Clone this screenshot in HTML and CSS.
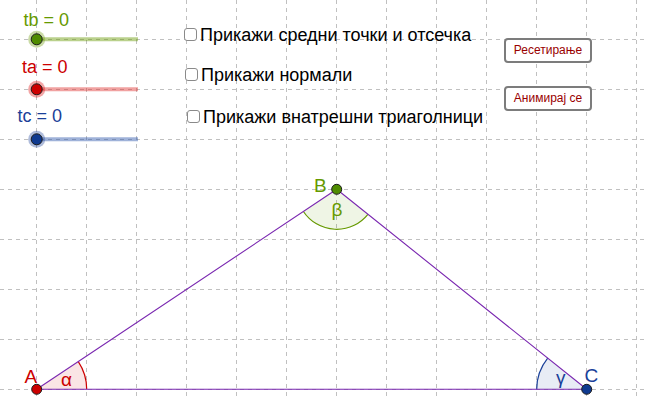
FILE: index.html
```html
<!DOCTYPE html>
<html>
<head>
<meta charset="utf-8">
<link rel="stylesheet" href="styles.css">
</head>
<body>
<div class="applet">
  <svg class="board" width="645" height="400" viewBox="0 0 645 400">
    <g class="grid">
      <line x1="36.5" y1="0" x2="36.5" y2="400"/>
      <line x1="86.5" y1="0" x2="86.5" y2="400"/>
      <line x1="136.5" y1="0" x2="136.5" y2="400"/>
      <line x1="186.5" y1="0" x2="186.5" y2="400"/>
      <line x1="236.5" y1="0" x2="236.5" y2="400"/>
      <line x1="286.5" y1="0" x2="286.5" y2="400"/>
      <line x1="336.5" y1="0" x2="336.5" y2="400"/>
      <line x1="386.5" y1="0" x2="386.5" y2="400"/>
      <line x1="436.5" y1="0" x2="436.5" y2="400"/>
      <line x1="486.5" y1="0" x2="486.5" y2="400"/>
      <line x1="536.5" y1="0" x2="536.5" y2="400"/>
      <line x1="586.5" y1="0" x2="586.5" y2="400"/>
      <line x1="636.5" y1="0" x2="636.5" y2="400"/>
      <line x1="0" y1="39.5" x2="645" y2="39.5"/>
      <line x1="0" y1="89.5" x2="645" y2="89.5"/>
      <line x1="0" y1="139.5" x2="645" y2="139.5"/>
      <line x1="0" y1="189.5" x2="645" y2="189.5"/>
      <line x1="0" y1="239.5" x2="645" y2="239.5"/>
      <line x1="0" y1="289.5" x2="645" y2="289.5"/>
      <line x1="0" y1="339.5" x2="645" y2="339.5"/>
      <line x1="0" y1="389.5" x2="645" y2="389.5"/>
    </g>

    <!-- sliders -->
    <line class="track track-g" x1="36.7" y1="39.3" x2="138" y2="39.3"/>
    <line class="track track-r" x1="36.7" y1="89.3" x2="138" y2="89.3"/>
    <line class="track track-b" x1="36.7" y1="139.3" x2="138" y2="139.3"/>
    <circle class="halo fill-g" cx="36.7" cy="39.3" r="8.5"/>
    <circle class="halo fill-r" cx="36.7" cy="89.3" r="8.5"/>
    <circle class="halo fill-b" cx="36.7" cy="139.3" r="8.5"/>
    <circle class="dot dot-g" cx="36.7" cy="39.3" r="5.5"/>
    <circle class="dot dot-r" cx="36.7" cy="89.3" r="5.5"/>
    <circle class="dot dot-b" cx="36.7" cy="139.3" r="5.5"/>
    <text class="lbl18 c-g" x="23.5" y="25.7">tb = 0</text>
    <text class="lbl18 c-r" x="22" y="72.8">ta = 0</text>
    <text class="lbl18 c-b" x="17.5" y="122">tc = 0</text>

    <!-- angle sectors -->
    <path class="sector sec-r" d="M36.7 389.3 L86.7 389.3 A50 50 0 0 0 78.3 361.6 Z"/>
    <path class="sector sec-g" d="M336.7 189.3 L303.4 211.5 A40 40 0 0 0 367.9 214.3 Z"/>
    <path class="sector sec-b" d="M586.7 389.3 L536.7 389.3 A50 50 0 0 1 547.7 358.1 Z"/>
    <path class="arc arc-r" d="M86.7 389.3 A50 50 0 0 0 78.3 361.6"/>
    <path class="arc arc-g" d="M303.4 211.5 A40 40 0 0 0 367.9 214.3"/>
    <path class="arc arc-b" d="M536.7 389.3 A50 50 0 0 1 547.7 358.1"/>

    <!-- triangle -->
    <polygon class="tri" points="36.7,389.3 336.7,189.3 586.7,389.3"/>

    <circle class="dot dot-r" cx="36.7" cy="389.3" r="5"/>
    <circle class="dot dot-g" cx="336.7" cy="189.3" r="5"/>
    <circle class="dot dot-b" cx="586.7" cy="389.3" r="5"/>

    <text class="lbl19 c-r" x="24.5" y="383">A</text>
    <text class="lbl19 c-g" x="314" y="191.5">B</text>
    <text class="lbl19 c-b" x="584.5" y="382">C</text>
    <text class="lbl19 c-r" x="61" y="386">α</text>
    <text class="lbl19 c-g" x="331.5" y="216">β</text>
    <text class="lbl19 c-b" x="556" y="384">γ</text>
  </svg>

  <label class="check check-1"><span class="box"></span><span class="check-text">Прикажи средни точки и отсечка</span></label>
  <label class="check check-2"><span class="box"></span><span class="check-text">Прикажи нормали</span></label>
  <label class="check check-3"><span class="box"></span><span class="check-text">Прикажи внатрешни триаголници</span></label>

  <button class="btn btn-reset">Ресетирање</button>
  <button class="btn btn-anim">Анимирај се</button>
</div>
</body>
</html>
```
FILE: styles.css
```css
html, body {
  margin: 0;
  padding: 0;
  background: #ffffff;
}

.applet {
  position: relative;
  width: 645px;
  height: 400px;
  overflow: hidden;
  background: #ffffff;
  font-family: "Liberation Sans", Arial, sans-serif;
}

.board {
  display: block;
}

.grid line {
  stroke: #c0c0c0;
  stroke-width: 1;
  stroke-dasharray: 4 4;
}

.track {
  stroke-width: 4;
  stroke-opacity: 0.45;
}
.track-g { stroke: #669900; }
.track-r { stroke: #e0302f; }
.track-b { stroke: #2a55aa; }

.halo { opacity: 0.35; }
.fill-g { fill: #669900; }
.fill-r { fill: #dd0000; }
.fill-b { fill: #1a4099; }

.dot {
  stroke: #1a1a1a;
  stroke-width: 1;
}
.dot-g { fill: #4f8c00; }
.dot-r { fill: #cc0000; }
.dot-b { fill: #0f3a90; }

.lbl18 {
  font-family: "Liberation Sans", Arial, sans-serif;
  font-size: 18px;
}
.lbl19 {
  font-family: "Liberation Sans", Arial, sans-serif;
  font-size: 19px;
}
.c-g { fill: #669900; }
.c-r { fill: #cc0000; }
.c-b { fill: #1a4099; }

.sector { stroke: none; }
.sec-r { fill: rgba(204, 0, 0, 0.1); }
.sec-g { fill: rgba(102, 153, 0, 0.1); }
.sec-b { fill: rgba(26, 64, 153, 0.1); }

.arc {
  fill: none;
  stroke-width: 1.2;
}
.arc-r { stroke: #cc0000; }
.arc-g { stroke: #669900; }
.arc-b { stroke: #1a4099; }

.tri {
  fill: none;
  stroke: #7a27b0;
  stroke-width: 1.1;
}

.check {
  position: absolute;
  display: flex;
  align-items: flex-start;
  gap: 3px;
  font-size: 18px;
  line-height: 20px;
  color: #000000;
  white-space: nowrap;
}
.check-1 { left: 184px; top: 25px; }
.check-2 { left: 185px; top: 65px; }
.check-3 { left: 187px; top: 107px; }

.box {
  width: 11px;
  height: 11px;
  margin-top: 3px;
  border: 1px solid #8a8a8a;
  border-radius: 3px;
  background: #ffffff;
}

.btn {
  position: absolute;
  width: 88px;
  height: 25px;
  box-sizing: border-box;
  padding: 0;
  border: 2px solid #7c7c7c;
  border-radius: 4px;
  background: #ffffff;
  color: #990000;
  font-family: "Liberation Sans", Arial, sans-serif;
  font-size: 12px;
  line-height: 21px;
  text-align: center;
}
.btn-reset { left: 504px; top: 38px; }
.btn-anim { left: 504px; top: 86px; }
```
